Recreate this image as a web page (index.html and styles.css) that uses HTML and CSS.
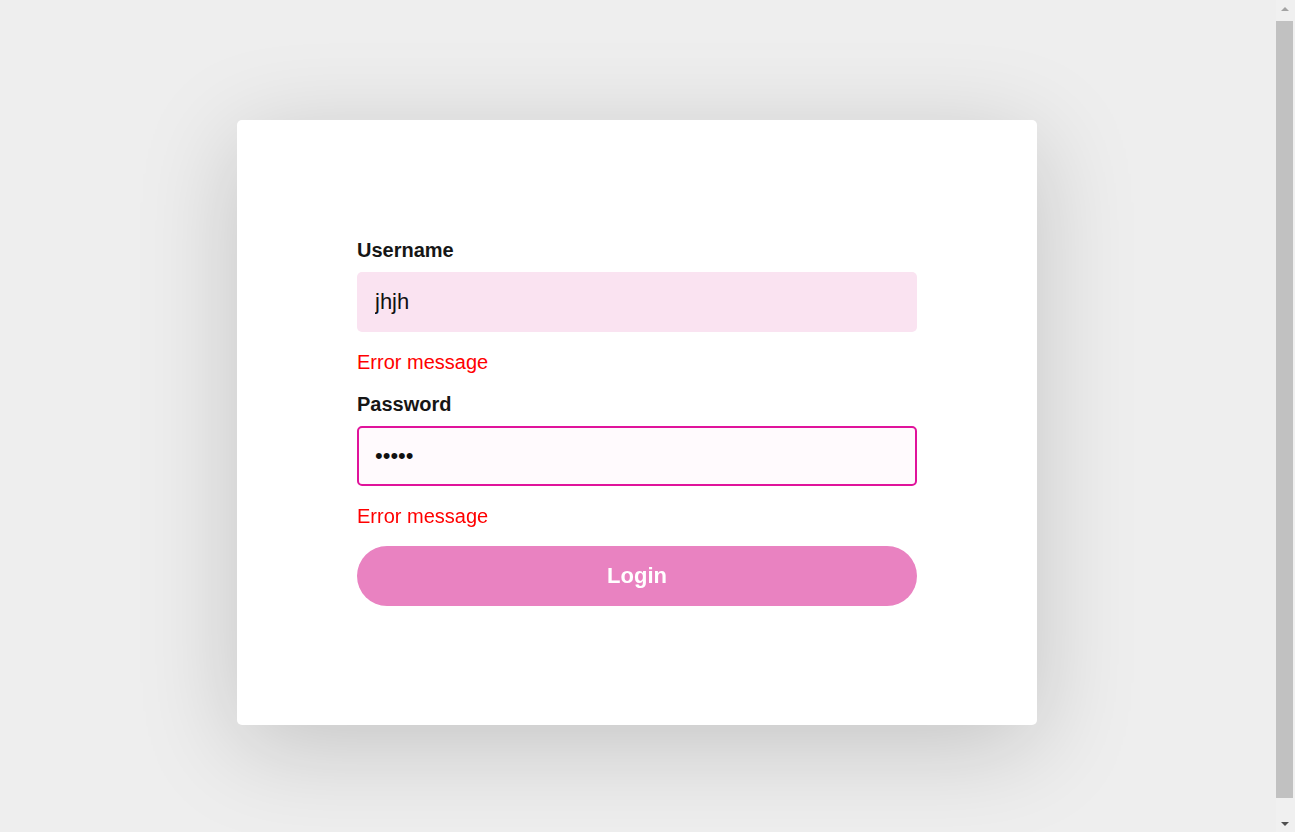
FILE: index.html
```html
<!DOCTYPE html>
<html lang="en">
<head>
<meta charset="utf-8">
<title>Login</title>
<link rel="stylesheet" href="styles.css">
</head>
<body>
<div class="layout">
  <main class="page">
    <section class="card">
      <form class="form">
        <label class="label" for="username">Username</label>
        <input class="input input-filled" id="username" type="text" value="jhjh">
        <p class="error">Error message</p>
        <label class="label" for="password">Password</label>
        <input class="input input-focus" id="password" type="password" value="jhjhj" autofocus>
        <p class="error">Error message</p>
        <button class="button" type="button">Login</button>
      </form>
    </section>
  </main>
  <div class="scrollbar" aria-hidden="true">
    <div class="arrow arrow-up"></div>
    <div class="track"><div class="thumb"></div></div>
    <div class="arrow arrow-down"></div>
  </div>
</div>
</body>
</html>
```

FILE: styles.css
```css
html, body {
  margin: 0;
  padding: 0;
  background: #eeeeee;
  font-family: "Liberation Sans", Arial, sans-serif;
  overflow: hidden;
}

.layout {
  display: flex;
  height: 832px;
}

.page {
  flex: 1;
  display: flex;
  justify-content: center;
  align-items: flex-start;
  padding: 120px 2px 0 0;
}

.card {
  width: 800px;
  box-sizing: border-box;
  padding: 119px 120px 119px;
  background: #ffffff;
  border-radius: 5px;
  box-shadow: 0 20px 100px rgba(0, 0, 0, 0.18);
}

.form {
  display: flex;
  flex-direction: column;
}

.label {
  font-size: 20px;
  line-height: 23px;
  font-weight: bold;
  color: #161616;
  margin-bottom: 10px;
}

.input {
  height: 60px;
  box-sizing: border-box;
  width: 100%;
  padding: 0 16px;
  border: 2px solid transparent;
  border-radius: 5px;
  font-family: "Liberation Sans", Arial, sans-serif;
  font-size: 22px;
  color: #111111;
  outline: none;
}

.input-filled {
  background: #fae3f1;
}

.input-focus {
  background: #fffafd;
  border-color: #e0139b;
}

.error {
  margin: 19px 0;
  font-size: 20px;
  line-height: 23px;
  color: #ff0000;
}

.button {
  height: 60px;
  margin-top: -1px;
  border: none;
  border-radius: 30px;
  background: #e982c1;
  color: #ffffff;
  font-family: "Liberation Sans", Arial, sans-serif;
  font-size: 22px;
  font-weight: bold;
  cursor: pointer;
}

.scrollbar {
  width: 19px;
  flex: none;
  display: flex;
  flex-direction: column;
  background: #f0f0f0;
  padding-right: 2px;
  box-sizing: border-box;
}

.arrow {
  height: 17px;
  display: flex;
  align-items: center;
  justify-content: center;
}

.arrow::before {
  content: "";
  width: 0;
  height: 0;
  border-left: 4px solid transparent;
  border-right: 4px solid transparent;
}

.arrow-up::before {
  border-bottom: 4px solid #a3a3a3;
}

.arrow-down::before {
  border-top: 4px solid #505050;
}

.track {
  flex: 1;
  padding-top: 4px;
  display: flex;
}

.thumb {
  flex: 1;
  margin-bottom: 17px;
  background: #c1c1c1;
}
```
